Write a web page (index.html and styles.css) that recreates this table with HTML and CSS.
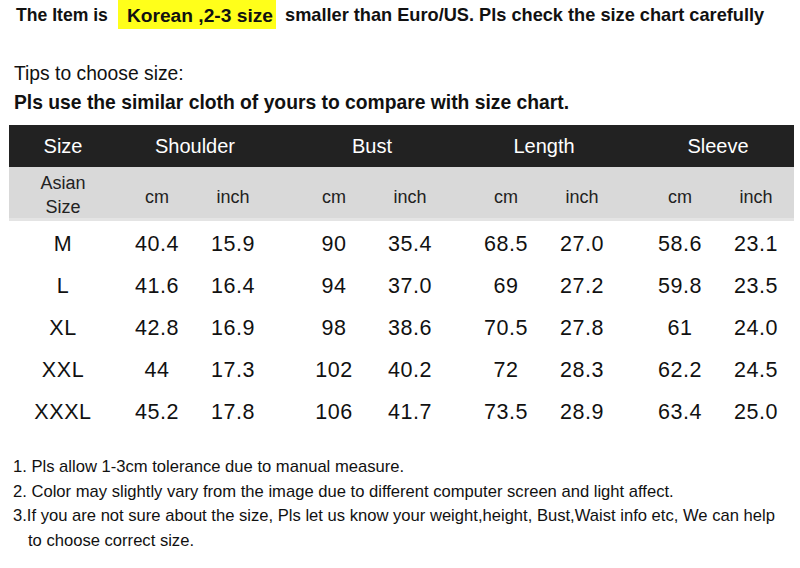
FILE: index.html
```html
<!DOCTYPE html>
<html>
<head>
<meta charset="utf-8">
<link rel="stylesheet" href="styles.css">
</head>
<body>
<div class="page">
  <div class="title">
    <span class="t-lead">The Item is</span>
    <span class="hl">Korean ,2-3 size</span>
    <span class="t-tail">smaller than Euro/US. Pls check the size chart carefully</span>
  </div>
  <div class="tips">Tips to choose size:</div>
  <div class="tips-bold">Pls use the similar cloth of yours to compare with size chart.</div>

  <div class="chart">
    <div class="row head">
      <div class="c size">Size</div>
      <div class="c grp">Shoulder</div>
      <div class="c grp">Bust</div>
      <div class="c grp">Length</div>
      <div class="c grp">Sleeve</div>
    </div>
    <div class="row sub">
      <div class="c size">Asian<br>Size</div>
      <div class="pair"><span>cm</span><span>inch</span></div>
      <div class="pair"><span>cm</span><span>inch</span></div>
      <div class="pair"><span>cm</span><span>inch</span></div>
      <div class="pair"><span>cm</span><span>inch</span></div>
    </div>
    <div class="row body">
      <div class="c size">M</div>
      <div class="pair"><span>40.4</span><span>15.9</span></div>
      <div class="pair"><span>90</span><span>35.4</span></div>
      <div class="pair"><span>68.5</span><span>27.0</span></div>
      <div class="pair"><span>58.6</span><span>23.1</span></div>
    </div>
    <div class="row body">
      <div class="c size">L</div>
      <div class="pair"><span>41.6</span><span>16.4</span></div>
      <div class="pair"><span>94</span><span>37.0</span></div>
      <div class="pair"><span>69</span><span>27.2</span></div>
      <div class="pair"><span>59.8</span><span>23.5</span></div>
    </div>
    <div class="row body">
      <div class="c size">XL</div>
      <div class="pair"><span>42.8</span><span>16.9</span></div>
      <div class="pair"><span>98</span><span>38.6</span></div>
      <div class="pair"><span>70.5</span><span>27.8</span></div>
      <div class="pair"><span>61</span><span>24.0</span></div>
    </div>
    <div class="row body">
      <div class="c size">XXL</div>
      <div class="pair"><span>44</span><span>17.3</span></div>
      <div class="pair"><span>102</span><span>40.2</span></div>
      <div class="pair"><span>72</span><span>28.3</span></div>
      <div class="pair"><span>62.2</span><span>24.5</span></div>
    </div>
    <div class="row body">
      <div class="c size">XXXL</div>
      <div class="pair"><span>45.2</span><span>17.8</span></div>
      <div class="pair"><span>106</span><span>41.7</span></div>
      <div class="pair"><span>73.5</span><span>28.9</span></div>
      <div class="pair"><span>63.4</span><span>25.0</span></div>
    </div>
  </div>

  <ol class="notes">
    <li>1. Pls allow 1-3cm tolerance due to manual measure.</li>
    <li>2. Color may slightly vary from the image due to different computer screen and light affect.</li>
    <li>3.If you are not sure about the size, Pls let us know your weight,height, Bust,Waist info etc, We can help<br><span class="indent">to choose correct size.</span></li>
  </ol>
</div>
</body>
</html>
```

FILE: styles.css
```css
* { box-sizing: border-box; }
html, body {
  margin: 0;
  padding: 0;
  background: #ffffff;
  width: 800px;
  height: 568px;
  overflow: hidden;
}
body {
  font-family: "Liberation Sans", Arial, sans-serif;
  color: #111111;
}
.title {
  display: flex;
  align-items: center;
  height: 29px;
  padding-left: 16px;
  padding-top: 2px;
  font-weight: bold;
  font-size: 17.6px;
  white-space: nowrap;
}
.t-lead { margin-right: 10px; }
.hl {
  background: #ffff1a;
  height: 29px;
  margin-top: -2px;
  line-height: 31px;
  padding: 0 3px 0 9px;
  font-size: 19.2px;
  margin-right: 9px;
}
.t-tail { font-size: 18.2px; }

.tips {
  margin-top: 34px;
  padding-left: 14px;
  font-size: 19.3px;
  line-height: 22px;
  height: 22px;
}
.tips-bold {
  margin-top: 7px;
  padding-left: 14px;
  font-size: 19.3px;
  font-weight: bold;
  line-height: 22px;
  height: 22px;
}

.chart {
  margin: 11px 0 0 9px;
  width: 785px;
}
.row {
  display: grid;
  grid-template-columns: 110px 152px 25px 152px 20px 152px 22px 152px;
  align-items: center;
}
.row > :nth-child(1) { grid-column: 1; }
.row > :nth-child(2) { grid-column: 2; }
.row > :nth-child(3) { grid-column: 4; }
.row > :nth-child(4) { grid-column: 6; }
.row > :nth-child(5) { grid-column: 8; }
.c { text-align: center; }
.size { padding-right: 2px; }
.pair {
  display: grid;
  grid-template-columns: 1fr 1fr;
  text-align: center;
}
.head {
  background: #222222;
  color: #ffffff;
  height: 42px;
  font-size: 20px;
}
.sub {
  background: #d9d9d9;
  height: 54px;
  font-size: 18px;
  line-height: 24px;
  color: #222222;
  border-bottom: 3px solid #e4e4e4;
}
.sub > * { position: relative; top: 2px; }
.sub .pair span { position: relative; top: 2px; }
.body {
  height: 42px;
  font-size: 21.5px;
  letter-spacing: 0.6px;
}
.body > * { position: relative; top: 2px; }

.notes {
  list-style: none;
  margin: 24px 0 0 0;
  padding: 0 0 0 13px;
  font-size: 16.6px;
  line-height: 24.5px;
}
.notes li { margin: 0; }
.indent { padding-left: 15px; }
```
